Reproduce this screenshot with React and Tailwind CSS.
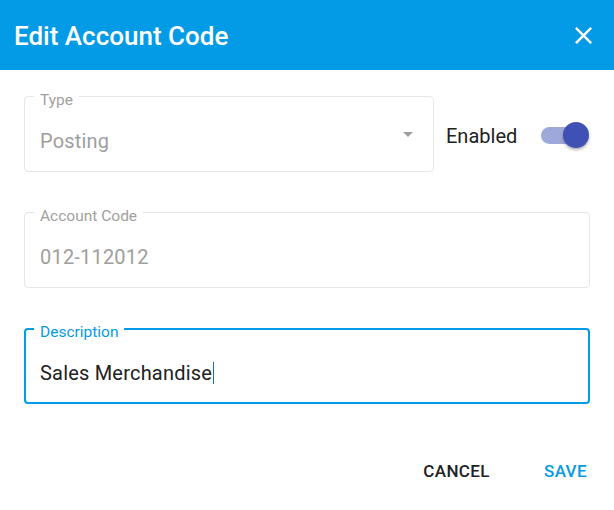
import { useState } from 'react';

const font = { fontFamily: 'Roboto, "Liberation Sans", sans-serif' };

function OutlinedBox({ label, value, focused, className = '', children }) {
  return (
    <div
      className={`relative h-[76px] rounded-[4px] ${
        focused ? 'border-2 border-[#039be5] pt-[31px] px-[14px]' : 'border border-[#e6e6e6] pt-[32px] px-[15px]'
      } ${className}`}
    >
      <span
        className={`absolute ${focused ? 'top-[-6px] left-[8px]' : 'top-[-5px] left-[9px]'} bg-white px-[6px] text-[15.5px] leading-[16px] ${
          focused ? 'text-[#039be5]' : 'text-[#a0a0a0]'
        }`}
      >
        {label}
      </span>
      <div
        className={`flex items-center text-[20px] leading-[24px] tracking-[0.2px] ${
          focused ? 'text-[#212121]' : 'text-[#9e9e9e]'
        }`}
      >
        {value}
        {focused && <span className="ml-[1px] inline-block w-[1px] h-[22px] bg-[#1e6fa8]" />}
      </div>
      {children}
    </div>
  );
}

export default function App() {
  const [enabled, setEnabled] = useState(true);

  return (
    <div className="w-[614px] h-[510px] bg-white" style={font}>
      <div className="h-[70px] bg-[#039be5] flex items-center justify-between pl-[14px] pr-[16px]">
        <h1 className="text-white text-[26px] font-medium leading-none pt-[1px]">Edit Account Code</h1>
        <svg width="29" height="29" viewBox="0 0 24 24" fill="white">
          <path d="M19 6.41 17.59 5 12 10.59 6.41 5 5 6.41 10.59 12 5 17.59 6.41 19 12 13.41 17.59 19 19 17.59 13.41 12z" />
        </svg>
      </div>

      <div className="px-6 pt-[26px]">
        <div className="flex items-center">
          <OutlinedBox label="Type" value="Posting" className="w-[410px]">
            <svg className="absolute right-[13px] top-[25px]" width="24" height="24" viewBox="0 0 24 24" fill="#9e9e9e">
              <path d="M7 10l5 5 5-5z" />
            </svg>
          </OutlinedBox>
          <span className="ml-3 mt-[3px] text-[20px] text-[#212121] leading-none">Enabled</span>
          <button
            onClick={() => setEnabled(!enabled)}
            className="relative ml-[24px] mt-[3px] w-[44px] h-[17px] rounded-full bg-[#9fa8da]"
          >
            <span className="absolute right-[-4px] top-[-5px] w-[26px] h-[26px] rounded-full bg-[#3f51b5] shadow-[0_2px_3px_rgba(0,0,0,0.3)]" />
          </button>
        </div>

        <OutlinedBox label="Account Code" value="012-112012" className="mt-10" />

        <OutlinedBox label="Description" value="Sales Merchandise" focused className="mt-10 h-[75px]" />

        <div className="flex justify-end items-center mt-[59px] pr-[3px] text-[17px] font-medium tracking-[0.4px] uppercase leading-none">
          <span className="text-[#212121]">Cancel</span>
          <span className="ml-[54px] text-[#039be5]">Save</span>
        </div>
      </div>
    </div>
  );
}
